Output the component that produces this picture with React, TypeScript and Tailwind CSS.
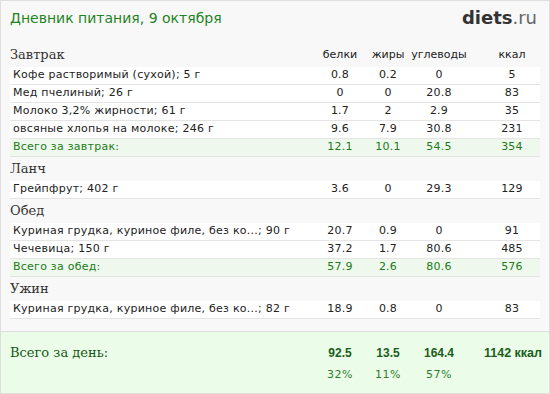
import React from "react";

interface FoodRow {
  name: string;
  protein: string;
  fat: string;
  carbs: string;
  kcal: string;
}

interface Meal {
  title: string;
  rows: FoodRow[];
  total?: FoodRow;
}

const meals: Meal[] = [
  {
    title: "Завтрак",
    rows: [
      { name: "Кофе растворимый (сухой); 5 г", protein: "0.8", fat: "0.2", carbs: "0", kcal: "5" },
      { name: "Мед пчелиный; 26 г", protein: "0", fat: "0", carbs: "20.8", kcal: "83" },
      { name: "Молоко 3,2% жирности; 61 г", protein: "1.7", fat: "2", carbs: "2.9", kcal: "35" },
      { name: "овсяные хлопья на молоке; 246 г", protein: "9.6", fat: "7.9", carbs: "30.8", kcal: "231" },
    ],
    total: { name: "Всего за завтрак:", protein: "12.1", fat: "10.1", carbs: "54.5", kcal: "354" },
  },
  {
    title: "Ланч",
    rows: [{ name: "Грейпфрут; 402 г", protein: "3.6", fat: "0", carbs: "29.3", kcal: "129" }],
  },
  {
    title: "Обед",
    rows: [
      { name: "Куриная грудка, куриное филе, без ко...; 90 г", protein: "20.7", fat: "0.9", carbs: "0", kcal: "91" },
      { name: "Чечевица; 150 г", protein: "37.2", fat: "1.7", carbs: "80.6", kcal: "485" },
    ],
    total: { name: "Всего за обед:", protein: "57.9", fat: "2.6", carbs: "80.6", kcal: "576" },
  },
  {
    title: "Ужин",
    rows: [{ name: "Куриная грудка, куриное филе, без ко...; 82 г", protein: "18.9", fat: "0.8", carbs: "0", kcal: "83" }],
  },
];

const grid = "grid grid-cols-[1fr_52px_44px_58px_16px_56px] items-center";
const serif = { fontFamily: '"DejaVu Serif", Georgia, serif' };
const arial = { fontFamily: '"Liberation Sans", Arial, sans-serif' };

const Row = ({ row, total }: { row: FoodRow; total?: boolean }) => (
  <div
    className={`${grid} h-[18px] border-b border-[#e4e4e4] text-[11px] tracking-[0.25px] ${
      total ? "bg-[#eef8ec] text-[#217a21]" : "bg-white text-[#222]"
    }`}
  >
    <div className="pl-[3px] whitespace-nowrap overflow-hidden">{row.name}</div>
    <div className="text-center">{row.protein}</div>
    <div className="text-center">{row.fat}</div>
    <div className="text-center">{row.carbs}</div>
    <div />
    <div className="text-center">{row.kcal}</div>
  </div>
);

export default function App() {
  return (
    <div
      className="w-[550px] h-[394px] bg-[#f8f8f8] border border-[#dedede] flex flex-col overflow-hidden"
      style={{ fontFamily: '"DejaVu Sans", Verdana, sans-serif' }}
    >
      {/* Header */}
      <div className="flex items-center justify-between h-[34px] pl-[9px] pr-[12px]">
        <h1 className="text-[14px] text-[#1f831f]">Дневник питания, 9 октября</h1>
        <div className="text-[18px] text-[#333] leading-none">
          <span className="font-bold">diets</span>
          <span className="text-[#666]">.ru</span>
        </div>
      </div>

      {/* Meals */}
      <div className="px-[9px] pt-[8px] flex flex-col">
        {meals.map((meal, i) => (
          <div key={meal.title} className="flex flex-col">
            <div className={`${grid} h-[24px]`}>
              <div className="text-[13px] text-[#333]" style={serif}>
                {meal.title}
              </div>
              {i === 0 ? (
                <>
                  <div className="text-center text-[11px] text-[#222]">белки</div>
                  <div className="text-center text-[11px] text-[#222]">жиры</div>
                  <div className="text-center text-[11px] text-[#222]">углеводы</div>
                  <div />
                  <div className="text-center text-[11px] text-[#222]">ккал</div>
                </>
              ) : null}
            </div>
            {meal.rows.map((row) => (
              <Row key={row.name} row={row} />
            ))}
            {meal.total && <Row row={meal.total} total />}
          </div>
        ))}
      </div>

      {/* Day total */}
      <div className="mt-auto h-[62px] bg-[#ebfde8] border-t border-[#dcdcdc] px-[9px] pt-[10px]">
        <div className={`${grid} h-[22px]`}>
          <div className="text-[13px] text-[#175717]" style={serif}>
            Всего за день:
          </div>
          <div className="text-center text-[12px] font-bold text-[#1b5e1b]" style={arial}>
            92.5
          </div>
          <div className="text-center text-[12px] font-bold text-[#1b5e1b]" style={arial}>
            13.5
          </div>
          <div className="text-center text-[12px] font-bold text-[#1b5e1b]" style={arial}>
            164.4
          </div>
          <div />
          <div
            className="text-right pr-[1px] text-[12.5px] font-bold text-[#1b5e1b] whitespace-nowrap"
            style={arial}
          >
            1142 ккал
          </div>
        </div>
        <div className={`${grid} h-[22px] text-[11px] tracking-[0.5px] text-[#2e7d2e]`}>
          <div />
          <div className="text-center">32%</div>
          <div className="text-center">11%</div>
          <div className="text-center">57%</div>
          <div />
          <div />
        </div>
      </div>
    </div>
  );
}
